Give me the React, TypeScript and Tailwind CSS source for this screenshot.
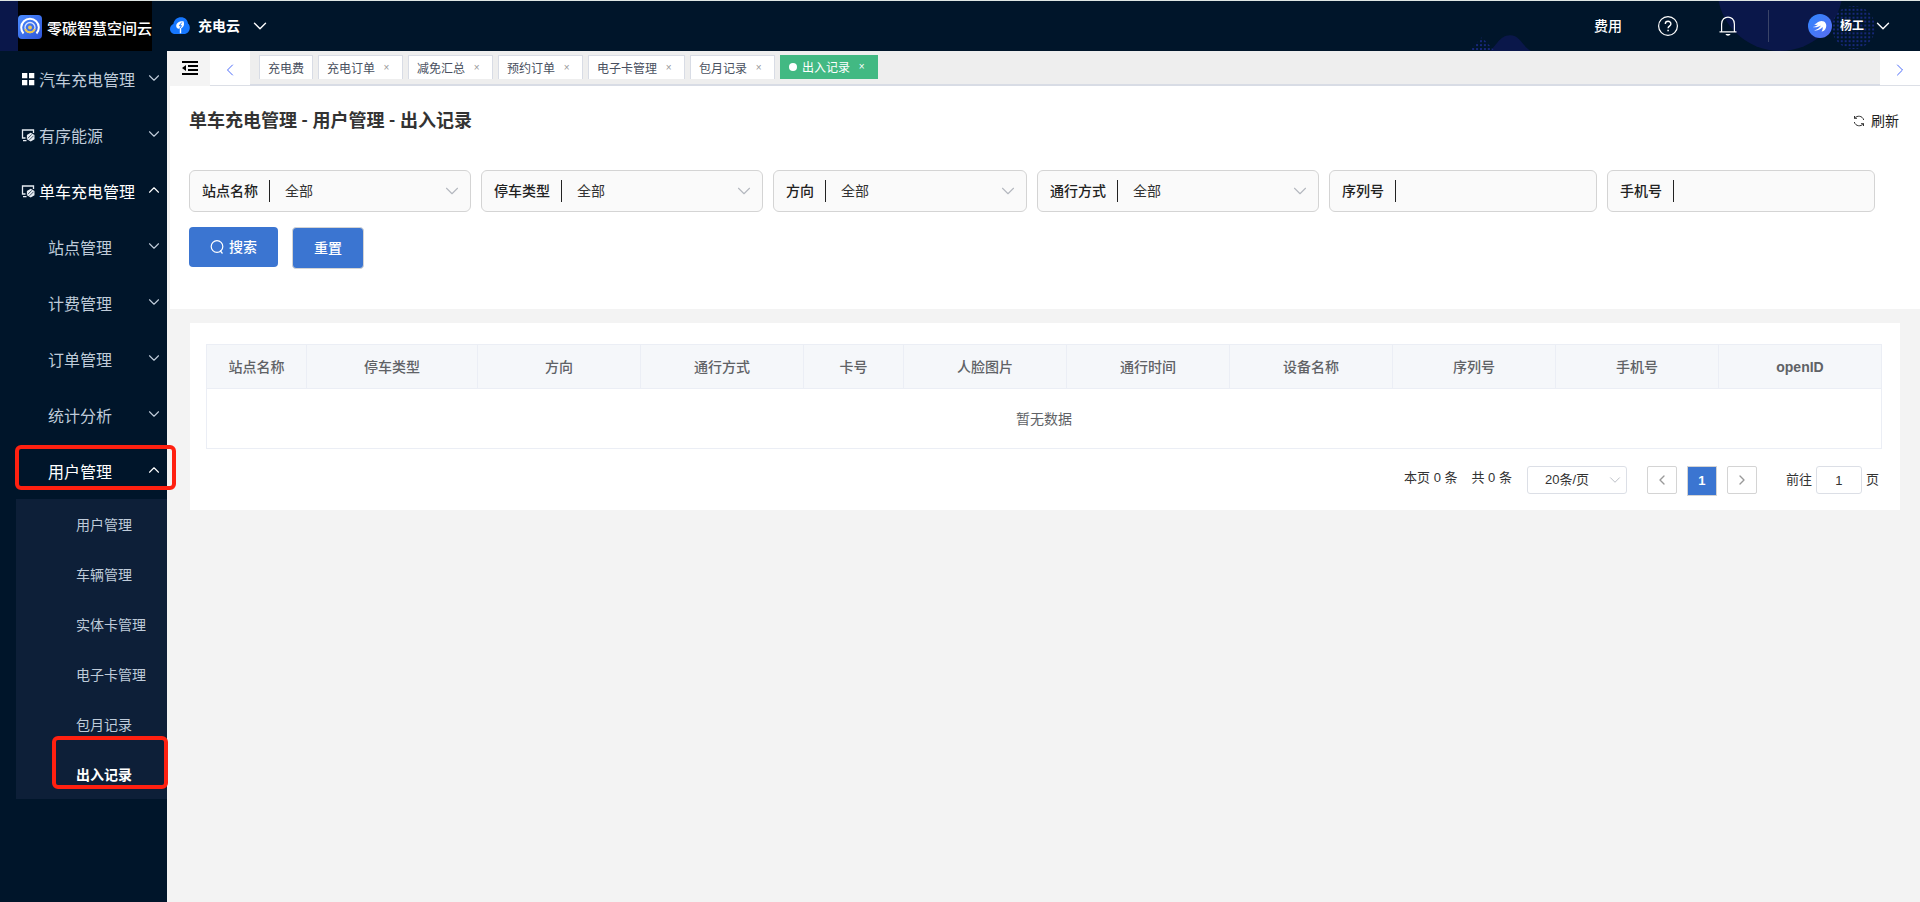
import { useState } from "react";
import { ChevronDown, ChevronLeft, ChevronRight, ChevronUp } from "lucide-react";

type MenuItem = {
  name: string;
  icon?: "grid" | "monitor";
  open?: boolean;
};

const menuItems: MenuItem[] = [
  { name: "汽车充电管理", icon: "grid" },
  { name: "有序能源", icon: "monitor" },
  { name: "单车充电管理", icon: "monitor", open: true },
  { name: "站点管理" },
  { name: "计费管理" },
  { name: "订单管理" },
  { name: "统计分析" },
  { name: "用户管理", open: true },
];

const subItems = [
  "用户管理",
  "车辆管理",
  "实体卡管理",
  "电子卡管理",
  "包月记录",
  "出入记录",
];

const tabs = [
  { name: "充电费", closable: false },
  { name: "充电订单", closable: true },
  { name: "减免汇总", closable: true },
  { name: "预约订单", closable: true },
  { name: "电子卡管理", closable: true },
  { name: "包月记录", closable: true },
  { name: "出入记录", closable: true },
];

const filters = [
  { id: "station", label: "站点名称", type: "select" },
  { id: "parkType", label: "停车类型", type: "select" },
  { id: "direction", label: "方向", type: "select" },
  { id: "passMode", label: "通行方式", type: "select" },
  { id: "serial", label: "序列号", type: "input" },
  { id: "phone", label: "手机号", type: "input" },
];

const columns = [
  { title: "站点名称", style: "w-[100px] font-medium" },
  { title: "停车类型", style: "w-[171px] font-medium" },
  { title: "方向", style: "font-medium" },
  { title: "通行方式", style: "font-medium" },
  { title: "卡号", style: "w-[100px] font-medium" },
  { title: "人脸图片", style: "font-medium" },
  { title: "通行时间", style: "font-medium" },
  { title: "设备名称", style: "font-medium" },
  { title: "序列号", style: "font-medium" },
  { title: "手机号", style: "font-medium" },
  { title: "openID", style: "font-bold" },
];

const GridIcon = () => (
  <svg className="size-[14px]" viewBox="0 0 14 14" fill="#fff">
    <path d="M1 1h5.300v5.300H1zM8 1h5.300v5.300H8zM1 8h5.300v5.300H1zM8 8h5.300v5.300H8z" />
  </svg>
);

const MonitorIcon = () => (
  <svg className="size-[14px]" viewBox="0 0 14 14" fill="none" stroke="#e6ebf2">
    <path d="M4.500 10H1.500V2h11v3M2 12.700h3.500" strokeWidth="1.300" />
    <path d="M9.700 4.800l3.800 2.200v4.200l-3.800 2.200-3.800-2.200V7z" fill="#e6ebf2" stroke="none" />
    <path d="M6.800 10.300l4-4M8.500 11.800l4-4" stroke="#00152a" strokeWidth=".7" />
  </svg>
);

const LogoIcon = () => (
  <svg className="size-6 shrink-0" viewBox="0 0 24 24" fill="none">
    <defs>
      <linearGradient id="logoBg" x1="0" y1="0" x2="1" y2="1">
        <stop offset="0" stopColor="#4b8cff" />
        <stop offset="1" stopColor="#2f55d8" />
      </linearGradient>
    </defs>
    <rect width="24" height="24" rx="4" fill="url(#logoBg)" />
    <path d="M5.500 18.500a8.800 8.800 0 1 1 13 0" stroke="#fff" strokeWidth="2" />
    <circle cx="12" cy="12.500" r="5" stroke="#dbe5fb" strokeWidth="1.300" />
    <path d="M7.300 14a5 5 0 0 0 9.400 0" stroke="#e9c451" strokeWidth="2" />
    <circle cx="12" cy="12.500" r="1.900" fill="#e9c451" />
  </svg>
);

const CloudIcon = () => (
  <svg className="h-[18px] w-5" viewBox="0 0 20 18" fill="none">
    <path
      d="M5 17C2 17 0 14.800 0 12c0-2.300 1.400-4.200 3.400-5C4 3 7.200.3 11 .3c4 0 6.700 2.700 7 6.200 1.200 1 1.800 2.500 1.800 4.200 0 3.500-2.500 6.300-6 6.300z"
      fill="#1677ff"
    />
    <path
      d="M13.500 4.300c-3.500-.6-7.300 1.300-7.300 4.700 0 2 1.800 3 3.600 2.500v4.700h1.400v-5c2.300-.8 3.600-3.500 2.300-6.900z"
      fill="#fff"
    />
    <path d="M11.800 5.500L9.300 8.700h2.200l-1.700 2.600" stroke="#1677ff" />
  </svg>
);

const HeaderPattern = () => (
  <svg
    className="absolute right-0 top-0 h-full w-[480px]"
    viewBox="0 0 480 51"
    aria-hidden="true"
  >
    <defs>
      <pattern id="dots" width="4" height="4" patternUnits="userSpaceOnUse">
        <rect width="2" height="2" fill="#17277a" />
      </pattern>
    </defs>
    <path d="M46 51c6-4 10-16 20.500-16S79 46 88 51z" fill="#0a174a" />
    <path d="M25 51L38 37l13 14z" fill="url(#dots)" />
    <circle cx="342" cy="-13" r="64" fill="#0a174a" />
    <circle cx="417" cy="27" r="22" fill="url(#dots)" />
  </svg>
);

const Header = () => (
  <header className="relative flex h-[51px] items-center border-t border-[#dfe6e4] bg-[#00152a] text-white">
    <HeaderPattern />
    <div className="flex h-full w-[152px] shrink-0 bg-[#0a174a] pl-[18px]">
      <div className="flex flex-1 items-center gap-[5px] whitespace-nowrap bg-black pt-[2px] text-[15px] font-medium">
        <LogoIcon />
        <span className="pt-1">零碳智慧空间云</span>
      </div>
    </div>
    <button className="ml-[18px] flex items-center text-sm font-bold">
      <CloudIcon />
      <span className="ml-2">充电云</span>
      <ChevronDown className="ml-[9px] size-[22px]" strokeWidth={1.5} />
    </button>
    <div className="relative ml-auto flex items-center pr-[26px]">
      <a href="#fee" className="text-sm font-medium">
        费用
      </a>
      <button aria-label="帮助" className="ml-9">
        <svg className="size-5" viewBox="0 0 20 20" fill="none" stroke="#fff">
          <circle cx="10" cy="10" r="9.400" strokeWidth="1.200" />
          <path d="M7.300 8c0-3.600 5.600-3.600 5.600 0 0 2-2.800 2.200-2.800 4.200" strokeWidth="1.400" />
          <path d="M10.100 13.800v1.500" strokeWidth="1.500" />
        </svg>
      </button>
      <button aria-label="通知" className="ml-10">
        <svg className="size-5" viewBox="0 0 20 20" fill="none" stroke="#fff">
          <path d="M3.600 15.500V8c0-9.300 12.800-9.300 12.800 0v7.500M1.500 15.800h17" strokeWidth="1.200" />
          <path d="M7.500 18h5c-.6 2.200-4.400 2.200-5 0z" fill="#fff" stroke="none" />
        </svg>
      </button>
      <span className="ml-[30px] h-8 w-px bg-[#3a4468]" />
      <button className="ml-[39px] flex items-center text-xs font-bold">
        <svg className="size-6" viewBox="0 0 24 24">
          <defs>
            <linearGradient id="avatarBg" x1="0" y1="0" x2="1" y2="1">
              <stop offset="0" stopColor="#2f86ff" />
              <stop offset="1" stopColor="#5a6cf0" />
            </linearGradient>
          </defs>
          <circle cx="12" cy="12" r="12" fill="url(#avatarBg)" />
          <path
            d="M6 10.500c2.500-.5 4-3.500 7.500-3.500 4 0 5.500 3.500 4.500 6.500-.8 2.500-2.500 4-4.500 4 1-1.500 1.500-3 1-4.500-2 2.500-5 4-8.500 3.500 3-.8 5.500-2.500 7-5-2.500 1.500-5.500 2.300-8.300 1.500 2-.3 4-1 5.300-2.200-1.300.2-2.800.2-4-.3z"
            fill="#fff"
          />
        </svg>
        <span className="ml-2">杨工</span>
        <ChevronDown className="ml-2 size-[22px]" strokeWidth={1.5} />
      </button>
    </div>
  </header>
);

const Sidebar = () => {
  const [current, setCurrent] = useState("出入记录");

  return (
    <aside className="relative z-10 w-[167px] shrink-0 bg-[#00152a] font-['Noto_Sans_CJK_SC',sans-serif]">
      <nav>
        {menuItems.map(({ name, icon, open }) => (
          <button
            key={name}
            className={`relative flex h-14 w-full items-center pr-1 text-base ${
              icon ? "pl-[21px]" : "pl-12"
            } ${open ? "text-white" : "text-[#bfcbd9]"}`}
          >
            {icon === "grid" && <GridIcon />}
            {icon === "monitor" && <MonitorIcon />}
            <span className={icon ? "ml-1" : ""}>{name}</span>
            {open ? (
              <ChevronUp className="mb-[3px] ml-auto size-[18px]" strokeWidth={1.5} />
            ) : (
              <ChevronDown className="mb-[3px] ml-auto size-[18px]" strokeWidth={1.5} />
            )}
            {name === "用户管理" && (
              <span className="absolute -right-[9px] bottom-[9px] left-[15px] top-[2px] rounded-md border-4 border-[#ff2010]" />
            )}
          </button>
        ))}
        <ul className="ml-4 bg-[#0d1f38]">
          {subItems.map((name) => (
            <li key={name} className="relative">
              <button
                className={`flex h-[50px] w-full items-center pl-[60px] text-sm ${
                  current === name ? "font-bold text-white" : "text-[#bfcbd9]"
                }`}
                onClick={() => setCurrent(name)}
              >
                {name}
              </button>
              {name === "出入记录" && (
                <span className="pointer-events-none absolute -right-px -top-[13px] bottom-[10px] left-9 rounded-md border-4 border-[#ff2010]" />
              )}
            </li>
          ))}
        </ul>
      </nav>
    </aside>
  );
};

const TabBar = () => {
  const [active, setActive] = useState("出入记录");

  return (
    <div className="flex h-[35px] bg-[#eee]">
      <button
        aria-label="折叠菜单"
        className="flex w-10 justify-center bg-[#f4f4f4] pt-[9px]"
      >
        <svg className="h-4 w-4" viewBox="0 0 16 16" fill="#000">
          <path d="M0 1h16v2H0zM6 5h10v2H6zM6 9h10v2H6zM0 13h16v2H0zM0 8l4-3v6z" />
        </svg>
      </button>
      <button
        aria-label="向左"
        className="flex w-10 items-center justify-center border-b border-[#dcdfe6] bg-white pt-1 text-[#4b6bfb]"
      >
        <ChevronLeft className="size-5" strokeWidth={1.2} />
      </button>
      <div className="flex flex-1 gap-[5px] border-b-2 border-[#d8dce5] pl-[9px] pt-1 font-['Noto_Sans_CJK_SC',sans-serif]">
        {tabs.map(({ name, closable }) => (
          <div
            key={name}
            className={`flex h-6 items-center border px-2 text-xs ${
              active === name
                ? "border-[#42b983] bg-[#42b983] text-white"
                : "border-b-0 border-[#d8dce5] bg-white text-[#495060]"
            }`}
          >
            {active === name && (
              <span className="mr-[5px] size-2 rounded-full bg-white" />
            )}
            <button onClick={() => setActive(name)}>{name}</button>
            {closable && (
              <button
                aria-label={`关闭${name}`}
                className={`ml-1 w-[15px] text-center font-['Liberation_Sans',sans-serif] text-[10px] ${
                  active === name ? "text-white" : "text-[#999]"
                }`}
              >
                ×
              </button>
            )}
          </div>
        ))}
      </div>
      <button
        aria-label="向右"
        className="flex w-10 items-center justify-center border-b border-[#dcdfe6] bg-white pt-1 text-[#4b6bfb]"
      >
        <ChevronRight className="size-5" strokeWidth={1.2} />
      </button>
    </div>
  );
};

const SearchPanel = () => (
  <section className="bg-white pb-10 pl-[19px] pr-[21px]">
    <div className="flex h-[84px] items-start justify-between pt-5">
      <h1 className="font-['Lato','Noto_Sans_CJK_SC',sans-serif] text-lg font-bold text-[#333]">
        单车充电管理 - 用户管理 - 出入记录
      </h1>
      <button className="flex items-center gap-[6px] pt-[5px] text-sm text-[#222]">
        <svg className="size-3" viewBox="0 0 12 12" fill="none" stroke="#333">
          <path d="M1.500 3.500V1M1.500 3.300H4M1.600 3.200C4 .2 9.500.5 10.700 5M10.500 8.500V11M10.500 8.700H8M10.400 8.800C8 11.800 2.500 11.500 1.300 7" />
        </svg>
        刷新
      </button>
    </div>
    <form onSubmit={(e) => e.preventDefault()}>
      <div className="flex flex-wrap gap-x-[10px] gap-y-3">
        {filters.map(({ id, label, type }) => (
          <div
            key={id}
            className="flex h-[42px] items-center rounded-md border border-[#d4d4d4] bg-[#fafafa] text-sm text-[#333]"
          >
            <label htmlFor={id} className="ml-3 mr-[11px] font-medium text-[#222]">
              {label}
            </label>
            <span className="h-[22px] w-px bg-[#222]" />
            {type === "select" ? (
              <div className="relative flex w-[200px] items-center">
                <select
                  id={id}
                  className="h-10 w-full appearance-none bg-transparent pl-[15px] outline-none"
                >
                  <option>全部</option>
                </select>
                <ChevronDown
                  className="pointer-events-none absolute right-[7px] size-[22px] text-[#b4b8bf]"
                  strokeWidth={1.2}
                />
              </div>
            ) : (
              <input
                id={id}
                type="text"
                className="h-10 w-[200px] bg-transparent px-[15px] outline-none"
              />
            )}
          </div>
        ))}
      </div>
      <div className="mt-[15px] flex gap-[14px] text-sm font-medium text-white">
        <button
          type="submit"
          className="flex h-10 w-[89px] items-center justify-center gap-[5px] rounded bg-[#3b75d1]"
        >
          <svg className="size-[14px]" viewBox="0 0 14 14" fill="none" stroke="#fff">
            <circle cx="7" cy="6.500" r="5.800" strokeWidth="1.200" />
            <path d="M10 10.500l2.500 3" strokeWidth="1.200" />
          </svg>
          搜索
        </button>
        <button
          type="reset"
          className="h-[42px] w-[72px] rounded border border-[#d4d4d4] bg-[#3b75d1]"
        >
          重置
        </button>
      </div>
    </form>
  </section>
);

const Pagination = () => {
  const [page, setPage] = useState("1");

  return (
    <div className="mt-[17px] flex h-[30px] items-start justify-end pr-[3px] text-[13px] text-[#333]">
      <span className="leading-6">本页 0 条</span>
      <span className="ml-[14px] leading-6">共 0 条</span>
      <div className="relative ml-[15px] flex w-[100px] items-center">
        <select
          aria-label="每页条数"
          className="h-7 w-full appearance-none rounded-[3px] border border-[#dcdfe6] bg-white pl-[17px] outline-none"
        >
          <option>20条/页</option>
        </select>
        <ChevronDown
          className="pointer-events-none absolute right-[3px] size-[18px] text-[#b4b8bf]"
          strokeWidth={1.2}
        />
      </div>
      <button
        aria-label="上一页"
        className="ml-5 flex h-7 w-[30px] items-center justify-center rounded-xs border border-[#d4d4d4] text-[#999]"
      >
        <ChevronLeft className="size-4" />
      </button>
      <button className="ml-[10px] h-[30px] w-[30px] border border-[#d4d4d4] bg-[#3b75d1] font-bold text-white">
        1
      </button>
      <button
        aria-label="下一页"
        className="ml-[10px] flex h-7 w-[30px] items-center justify-center rounded-xs border border-[#d4d4d4] text-[#999]"
      >
        <ChevronRight className="size-4" />
      </button>
      <label className="ml-[29px] flex h-7 items-center gap-1">
        前往
        <input
          type="text"
          className="h-7 w-[46px] rounded-[3px] border border-[#dcdfe6] text-center outline-none"
          value={page}
          onChange={(e) => setPage(e.target.value)}
        />
        页
      </label>
    </div>
  );
};

const RecordTable = () => (
  <section className="mx-5 mt-[14px] bg-white pb-[14px] pl-4 pr-[18px] pt-[21px]">
    <table className="w-full table-fixed border-collapse border border-[#ebeef5] text-sm">
      <thead>
        <tr className="h-[44px] bg-[#f5f7fa]">
          {columns.map(({ title, style }) => (
            <th
              key={title}
              className={`border border-[#ebeef5] text-[#606266] ${style}`}
            >
              {title}
            </th>
          ))}
        </tr>
      </thead>
      <tbody>
        <tr className="h-[60px]">
          <td colSpan={columns.length} className="text-center text-[#606266]">
            暂无数据
          </td>
        </tr>
      </tbody>
    </table>
    <Pagination />
  </section>
);

const App = () => {
  return (
    <div className="flex min-h-screen flex-col bg-[#f3f3f3] font-['Liberation_Sans','Noto_Sans_CJK_SC',sans-serif]">
      <Header />
      <div className="flex flex-1">
        <Sidebar />
        <main className="min-w-0 flex-1 pl-[3px]">
          <TabBar />
          <SearchPanel />
          <RecordTable />
        </main>
      </div>
    </div>
  );
};

export default App;
